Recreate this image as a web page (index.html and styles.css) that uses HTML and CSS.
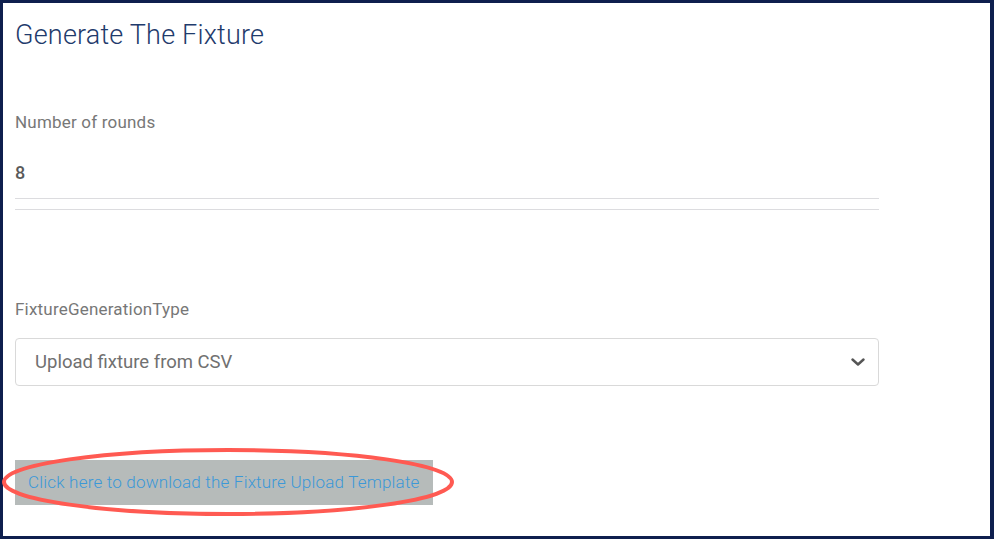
FILE: index.html
```html
<!DOCTYPE html>
<html lang="en">
<head>
<meta charset="utf-8">
<title>Generate The Fixture</title>
<link rel="stylesheet" href="styles.css">
</head>
<body>
<div class="frame">
  <h1 class="title">Generate The Fixture</h1>
  <div class="field rounds">
    <label class="label">Number of rounds</label>
    <div class="value">8</div>
    <div class="rule"></div>
    <div class="rule second"></div>
  </div>
  <div class="field type">
    <label class="label">FixtureGenerationType</label>
    <div class="select">
      <span>Upload fixture from CSV</span>
      <svg class="chev" width="14" height="8" viewBox="0 0 14 8"><path d="M1.5 1.5 L7 6.5 L12.5 1.5" fill="none" stroke="#555" stroke-width="2.4" stroke-linecap="round" stroke-linejoin="round"/></svg>
    </div>
  </div>
  <div class="download">
    <a class="link" href="#">Click here to download the Fixture Upload Template</a>
    <svg class="ring" width="456" height="72" viewBox="0 0 456 72"><ellipse cx="226" cy="35" rx="224" ry="32" fill="none" stroke="#ff5a52" stroke-width="4"/></svg>
  </div>
</div>
</body>
</html>
```
FILE: styles.css
```css
html, body {
  margin: 0;
  padding: 0;
  background: #fff;
}
.frame {
  box-sizing: border-box;
  width: 994px;
  height: 539px;
  border: 3px solid #0e1f4e;
  border-right-width: 4px;
  padding: 0 0 0 12px;
  font-family: Roboto, "Liberation Sans", sans-serif;
}
.title {
  margin: 16px 0 0;
  font-size: 27px;
  font-weight: 300;
  letter-spacing: 0.2px;
  line-height: 32px;
  color: #1f3b6c;
}
.field {
  width: 864px;
}
.rounds {
  margin-top: 61px;
}
.label {
  display: block;
  font-size: 17px;
  letter-spacing: 0.2px;
  line-height: 20px;
  color: #777;
}
.value {
  margin-top: 30px;
  font-size: 18px;
  line-height: 22px;
  font-weight: 500;
  color: #5a5a5a;
}
.rule {
  margin-top: 14px;
  height: 1px;
  background: #dcdcdf;
}
.rule.second {
  margin-top: 10px;
}
.type {
  margin-top: 89px;
}
.select {
  box-sizing: border-box;
  margin-top: 19px;
  height: 48px;
  border: 1px solid #d9d9d9;
  border-radius: 4px;
  display: flex;
  align-items: center;
  justify-content: space-between;
  padding: 0 13px 0 19px;
  font-size: 18.5px;
  color: #707070;
}
.download {
  position: relative;
  margin-top: 74px;
  width: 418px;
}
.link {
  display: block;
  background: #b6bbba;
  height: 45px;
  line-height: 45px;
  padding-left: 13px;
  font-size: 17px;
  font-weight: 300;
  letter-spacing: 0.2px;
  color: #3b98d8;
  text-decoration: none;
}
.ring {
  position: absolute;
  left: -13px;
  top: -13px;
}
```
